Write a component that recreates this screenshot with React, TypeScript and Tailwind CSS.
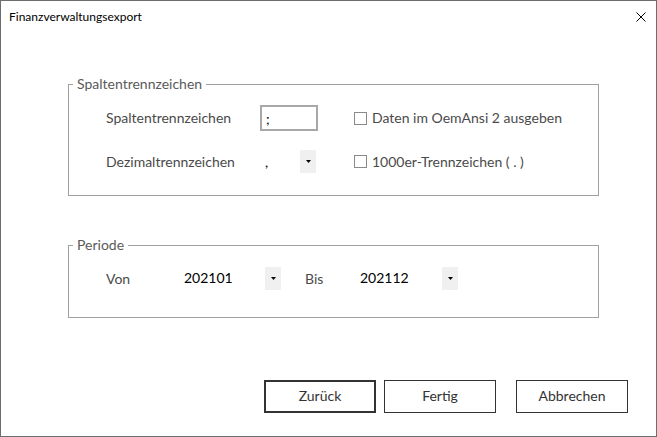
import * as React from "react";

const Arrow: React.FC = () => (
  <svg width="5" height="3" viewBox="0 0 5 3" className="block">
    <path d="M0 0h5L2.5 3z" fill="#000" />
  </svg>
);

const DropButton: React.FC = () => (
  <div className="flex items-center justify-center w-[16px] h-[23px] bg-[#f0f0f0]">
    <Arrow />
  </div>
);

const CheckRow: React.FC<{ label: string }> = ({ label }) => (
  <div className="flex items-center gap-[5px]">
    <div className="w-[13px] h-[13px] border border-[#8a8a8a] bg-white" />
    <span className="text-[14px] text-[#4a4a4a] -mt-[1px]">{label}</span>
  </div>
);

export default function App() {
  return (
    <div
      className="w-[657px] h-[437px] bg-white border border-[#6d6d6d] flex flex-col"
      style={{ fontFamily: "Lato, 'Noto Sans', sans-serif" }}
    >
      {/* Titelleiste */}
      <div className="flex items-center justify-between h-[31px] pl-[8px] pr-[10px]">
        <span className="text-[12px] text-black">Finanzverwaltungsexport</span>
        <svg width="10" height="10" viewBox="0 0 10 10">
          <path d="M0.5 0.5L9.5 9.5M9.5 0.5L0.5 9.5" stroke="#000" strokeWidth="1" />
        </svg>
      </div>

      {/* Spaltentrennzeichen */}
      <fieldset className="ml-[67px] mt-[42px] w-[531px] border border-[#a0a0a0] pl-[37px] pt-[11px] pb-[22px]">
        <legend className="-ml-[33px] px-[4px] text-[14px] text-[#5a5a5a] leading-[20px] -mt-[1px]">
          Spaltentrennzeichen
        </legend>
        <div className="grid grid-cols-[154px_94px_1fr] gap-y-[19px] items-center">
          <span className="text-[14px] text-[#4a4a4a] -mt-[2px]">Spaltentrennzeichen</span>
          <div className="w-[58px] h-[26px] border-2 border-[#a8a8a8] flex items-center pl-[4px] text-[14px] text-black">
            ;
          </div>
          <CheckRow label="Daten im OemAnsi 2 ausgeben" />

          <span className="text-[14px] text-[#4a4a4a] -mt-[1px]">Dezimaltrennzeichen</span>
          <div className="w-[56px] flex items-center justify-between">
            <span className="pl-[5px] text-[14px] text-black">,</span>
            <DropButton />
          </div>
          <CheckRow label="1000er-Trennzeichen ( . )" />
        </div>
      </fieldset>

      {/* Periode */}
      <fieldset className="ml-[67px] mt-[39px] w-[531px] border border-[#a0a0a0] pl-[37px] pt-[12px] pb-[27px]">
        <legend className="-ml-[33px] px-[4px] text-[14px] text-[#5a5a5a] leading-[20px]">Periode</legend>
        <div className="flex items-center h-[23px] text-[14px]">
          <span className="w-[78px] text-[#4a4a4a] -mt-[1px]">Von</span>
          <span className="w-[81px] text-black -mt-[3px]">202101</span>
          <DropButton />
          <span className="ml-[24px] w-[55px] text-[#4a4a4a] -mt-[1px]">Bis</span>
          <span className="w-[82px] text-black -mt-[3px]">202112</span>
          <DropButton />
        </div>
      </fieldset>

      {/* Schaltflächen */}
      <div className="mt-auto mb-[23px] flex justify-end pr-[28px] text-[14px] text-[#333]">
        <button className="w-[112px] h-[33px] border-2 border-[#333] bg-white pb-[3px]">Zurück</button>
        <button className="ml-[8px] w-[112px] h-[33px] border border-[#333] bg-white pb-[3px]">Fertig</button>
        <button className="ml-[20px] w-[112px] h-[33px] border border-[#333] bg-white pb-[3px]">Abbrechen</button>
      </div>
    </div>
  );
}
